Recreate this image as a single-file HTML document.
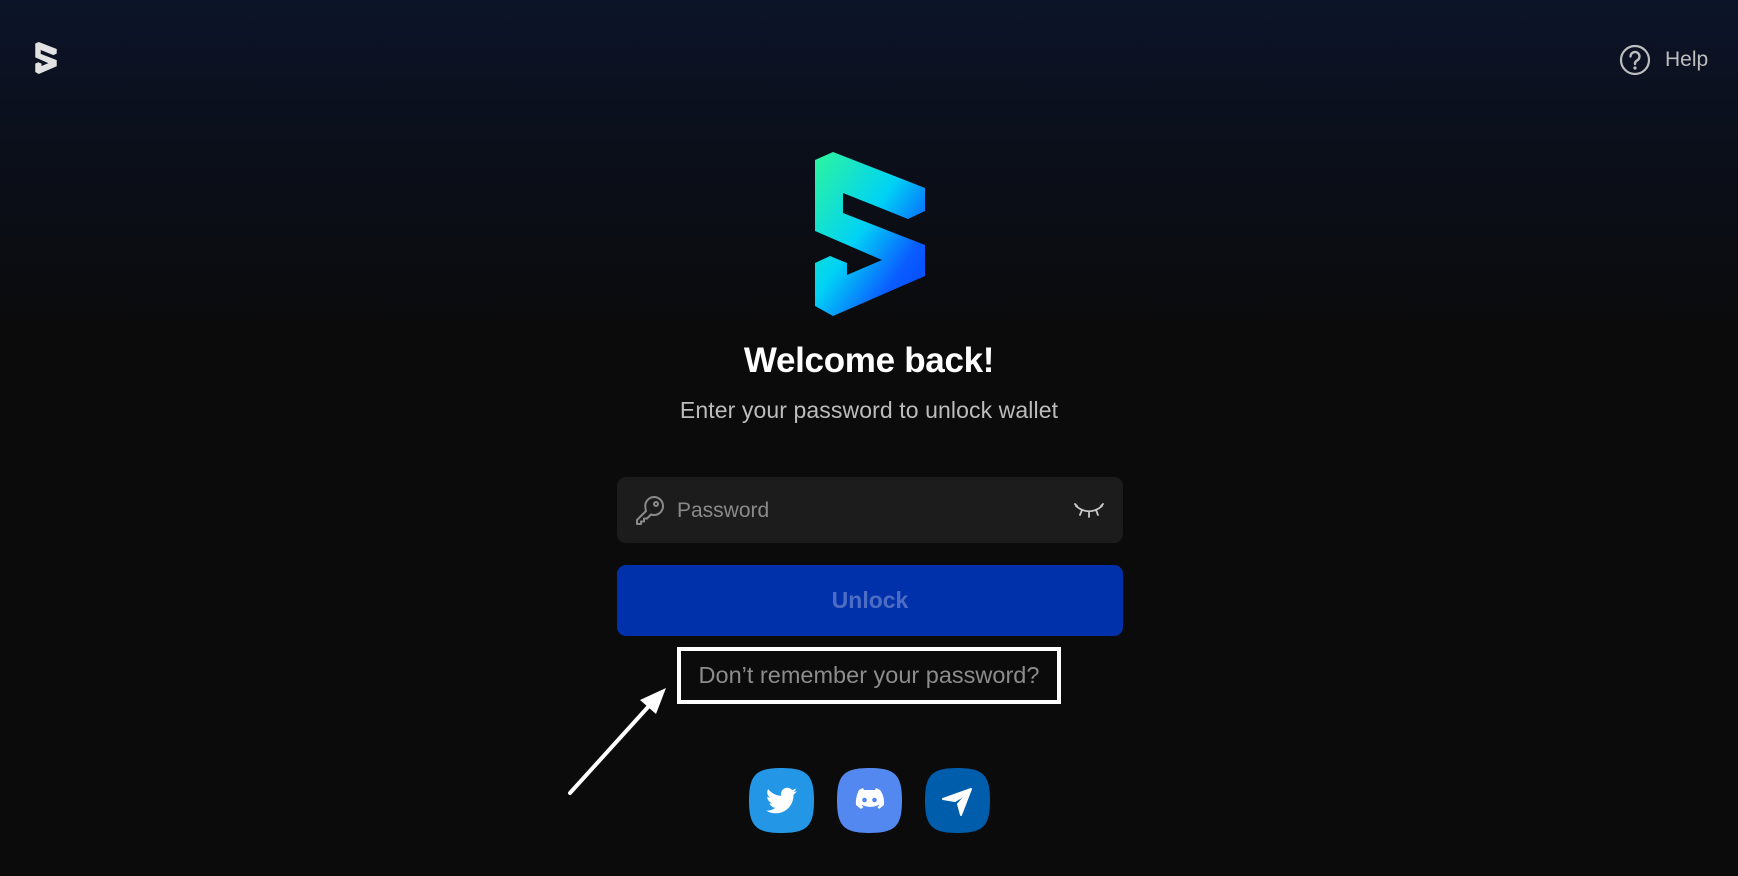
<!DOCTYPE html>
<html><head><meta charset="utf-8"><style>
*{margin:0;padding:0;box-sizing:border-box}
body{width:1738px;height:876px;overflow:hidden;background:linear-gradient(180deg,#0c1429 0px,#0b0f1a 150px,#0b0b0c 330px,#0b0b0b 876px);font-family:"Liberation Sans",sans-serif;position:relative}
.abs{position:absolute}
</style></head><body>
<svg class="abs" style="left:35px;top:42px" width="22" height="32" viewBox="0 0 110 164"><path fill="#e2e2e2" d="M0 8L18 0L110 36L110 59L93 67L28 41L28 61L110 93L110 124L18 164L0 154L0 111L15 104L32 111L32 123L67 108L0 79Z"/></svg>
<svg class="abs" style="left:1619px;top:44px" width="32" height="32" viewBox="0 0 32 32"><circle cx="16" cy="16" r="14" fill="none" stroke="#bdbdbd" stroke-width="2.2"/><path d="M11.5 12.5a4.5 4.5 0 1 1 6.5 4c-1.3.7-2 1.5-2 3v.5" fill="none" stroke="#bdbdbd" stroke-width="2.4" stroke-linecap="round"/><circle cx="16" cy="24" r="1.6" fill="#bdbdbd"/></svg>
<div class="abs" style="left:1665px;top:48px;font-size:21px;color:#bdbdbd">Help</div>
<svg class="abs" style="left:815px;top:152px" width="110" height="164" viewBox="0 0 110 164"><defs><linearGradient id="g" x1="0" y1="0" x2="1" y2="1"><stop offset="0" stop-color="#2ef59c"/><stop offset="0.45" stop-color="#00d2f5"/><stop offset="0.75" stop-color="#0a5cff"/><stop offset="1" stop-color="#0044ff"/></linearGradient></defs><path fill="url(#g)" d="M0 8L18 0L110 36L110 59L93 67L28 41L28 61L110 93L110 124L18 164L0 154L0 111L15 104L32 111L32 123L67 108L0 79Z"/></svg>
<div class="abs" style="left:0;width:1738px;top:341px;text-align:center;font-size:35px;font-weight:bold;color:#fff;letter-spacing:-0.3px">Welcome back!</div>
<div class="abs" style="left:0;width:1738px;top:397px;text-align:center;font-size:23px;color:#bcbcbc;letter-spacing:0.1px">Enter your password to unlock wallet</div>
<div class="abs" style="left:617px;top:477px;width:506px;height:66px;background:#1c1c1c;border-radius:9px"></div>
<svg class="abs" style="left:634px;top:494px" width="32" height="32" viewBox="0 0 32 32"><path d="M20 3a9 9 0 0 1 0 18c-1 0-2-.2-3-.5L13 24.5h-3v3H7v2.5H3v-4l9-9c-.3-1-.5-2-.5-3A9 9 0 0 1 20 3z" fill="none" stroke="#8a8a8a" stroke-width="2" stroke-linejoin="round"/><circle cx="22" cy="10" r="2" fill="none" stroke="#8a8a8a" stroke-width="2"/></svg>
<div class="abs" style="left:677px;top:499px;font-size:21px;color:#8a8a8a">Password</div>
<svg class="abs" style="left:1074px;top:502px" width="30" height="16" viewBox="0 0 30 16"><path d="M2 4c8 7 18 7 26 0M8 8l-2 5M15 10v5M22 8l2 5M3 4l-2 -2M27 4l2-2" fill="none" stroke="#c8c8c8" stroke-width="1.8" stroke-linecap="round"/></svg>
<div class="abs" style="left:617px;top:565px;width:506px;height:71px;background:#0031aa;border-radius:9px;text-align:center;line-height:71px;font-size:23px;font-weight:bold;color:#4d6cc4">Unlock</div>
<div class="abs" style="left:677px;top:647px;width:384px;height:57px;border:4px solid #fff;text-align:center;line-height:49px;font-size:23.5px;color:#8c8c8c;letter-spacing:0px">Don’t remember your password?</div>
<svg class="abs" style="left:560px;top:680px" width="120" height="120" viewBox="0 0 120 120"><line x1="10" y1="113" x2="98" y2="16" stroke="#fff" stroke-width="4" stroke-linecap="round"/><path d="M106 8L80 20L96 34Z" fill="#fff"/></svg>
<svg class="abs" style="left:749px;top:768px" width="65" height="65" viewBox="0 0 65 65"><path d="M32.5 0C58 0 65 7 65 32.5S58 65 32.5 65 0 58 0 32.5 7 0 32.5 0Z" fill="#2496e6"/><path d="M48 23c-1.2.5-2.4.9-3.7 1 1.3-.8 2.3-2 2.8-3.5-1.2.7-2.6 1.3-4 1.5a6.3 6.3 0 0 0-10.9 5.8c-5.300-.3-10-2.800-13.100-6.700-1.700 2.900-.8 6.600 2 8.500-1 0-2-.3-2.900-.8 0 3.100 2.200 5.800 5.200 6.400-.9.300-1.900.3-2.900.1.800 2.600 3.200 4.400 5.900 4.400-2.800 2.200-6.300 3.200-9.400 2.800 2.900 1.800 6.200 2.800 9.700 2.800 11.600 0 18.100-9.800 17.800-18.600 1.200-.9 2.300-2 3.100-3.200z" fill="#fff"/></svg>
<svg class="abs" style="left:837px;top:768px" width="65" height="65" viewBox="0 0 65 65"><path d="M32.5 0C58 0 65 7 65 32.5S58 65 32.5 65 0 58 0 32.5 7 0 32.5 0Z" fill="#5288f0"/><path d="M22 22l4-2 1 2h11l1-2 4 2c3 4 4.500 9 4 15l-5 4-1.500-2 2-1.500-1-.5c-5 2.500-11 2.500-16 0l-1 .5 2 1.500L24 41l-5-4c-.5-6 1-11 3-15z" fill="#fff"/><circle cx="27.5" cy="32" r="2.300" fill="#5288f0"/><circle cx="37.5" cy="32" r="2.300" fill="#5288f0"/></svg>
<svg class="abs" style="left:925px;top:768px" width="65" height="65" viewBox="0 0 65 65"><path d="M32.5 0C58 0 65 7 65 32.5S58 65 32.5 65 0 58 0 32.5 7 0 32.5 0Z" fill="#005dab"/><path d="M18 31L46 21L36 47L33 36L43 25L30 33Z" fill="#fff" stroke="#fff" stroke-width="2" stroke-linejoin="round"/></svg>
</body></html>
